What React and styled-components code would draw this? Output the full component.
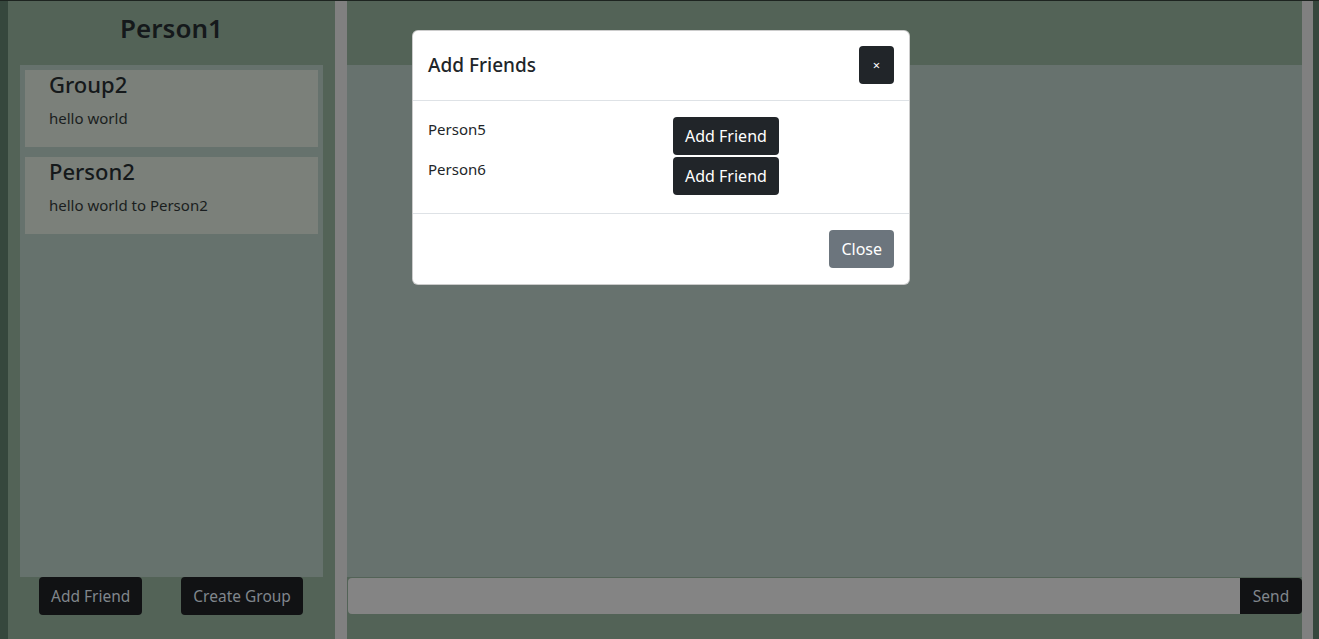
// chat page with the "Add Friends" modal open over it
import styled, { createGlobalStyle } from "styled-components";

const GlobalStyle = createGlobalStyle`
    body {
        margin: 0;
        background: #36473d;
        font-family: "Noto Sans", "Open Sans", sans-serif;
        overflow: hidden;
    }
`;

const Page = styled.div`
    position: relative;
    display: flex;
    height: 639px;
    border-top: 1px solid #1d2420;
    box-sizing: border-box;
    padding: 0 6px 0 8px;
`;

const Sidebar = styled.div`
    width: 327px;
    display: flex;
    flex-direction: column;
    background: #536357;
`;

const UserName = styled.h1`
    margin: 0;
    height: 64px;
    display: flex;
    align-items: center;
    justify-content: center;
    padding-bottom: 10px;
    box-sizing: border-box;
    font-size: 26px;
    font-weight: 600;
    color: #15191b;
`;

const ChatList = styled.div`
    flex: 1;
    margin: 0 12px;
    padding: 5px;
    background: #66726d;
    display: flex;
    flex-direction: column;
    gap: 10px;
`;

const ChatCard = styled.div`
    height: 77px;
    padding: 0 24px;
    background: #7b807a;
    box-sizing: border-box;
`;

const ChatName = styled.h3`
    margin: 0;
    font-size: 22px;
    font-weight: 500;
    line-height: 28px;
    color: #15191b;
`;

const LastMessage = styled.p`
    margin: 8px 0 0;
    font-size: 15px;
    line-height: 24px;
    color: #1a1e20;
`;

const SideActions = styled.div`
    height: 62px;
    display: flex;
    gap: 39px;
    padding-left: 31px;
    align-items: flex-start;
`;

const DarkButton = styled.button`
    height: 38px;
    padding: 0 12px;
    border: none;
    border-radius: 4px;
    background: ${p => (p.$dimmed ? "#111214" : "#212529")};
    color: ${p => (p.$dimmed ? "#80868c" : "#fff")};
    font-family: inherit;
    font-size: ${p => (p.$dimmed ? "15.5px" : "16px")};
    cursor: pointer;
`;

const Divider = styled.div`
    width: 12px;
    background: #808080;
`;

const Main = styled.div`
    flex: 1;
    display: flex;
    flex-direction: column;
    background: #536357;
`;

const MainHeader = styled.div`
    height: 64px;
`;

const Messages = styled.div`
    flex: 1;
    background: #67726e;
`;

const Composer = styled.div`
    height: 62px;
    display: flex;
    align-items: flex-start;
    padding: 1px 0 0 1px;
    box-sizing: border-box;
`;

const MessageInput = styled.input`
    flex: 1;
    height: 36px;
    border: none;
    border-radius: 4px 0 0 4px;
    background: #848484;
    box-sizing: border-box;
    outline: none;
`;

const SendButton = styled(DarkButton)`
    height: 36px;
    width: 62px;
    border-radius: 0 4px 4px 0;
`;

const RightDivider = styled(Divider)`
    width: 11px;
`;

const Modal = styled.div`
    position: absolute;
    left: 412px;
    top: 29px;
    width: 498px;
    background: #fff;
    border: 1px solid rgba(0, 0, 0, 0.2);
    border-radius: 6px;
    box-sizing: border-box;
    color: #212529;
`;

const ModalHeader = styled.div`
    display: flex;
    align-items: center;
    justify-content: space-between;
    padding: 15px 15px 16px;
    border-bottom: 1px solid #dee2e6;
`;

const ModalTitle = styled.h5`
    margin: 0;
    font-size: 19px;
    font-weight: 500;
`;

const CloseX = styled(DarkButton)`
    width: 35px;
    padding: 0;
    font-size: 13px;
`;

const ModalBody = styled.div`
    padding: 16px 15px 18px;
    border-bottom: 1px solid #dee2e6;
    display: flex;
    flex-direction: column;
    gap: 2px;
`;

const FriendRow = styled.div`
    display: grid;
    grid-template-columns: 245px auto;
    align-items: start;
    justify-items: start;
`;

const FriendName = styled.span`
    font-size: 15px;
    line-height: 24px;
`;

const ModalFooter = styled.div`
    display: flex;
    justify-content: flex-end;
    padding: 16px 15px;
`;

const GreyButton = styled(DarkButton)`
    background: #6c757d;
`;

const chats = [
    { name: "Group2", last: "hello world" },
    { name: "Person2", last: "hello world to Person2" },
];

const candidates = ["Person5", "Person6"];

export default function App() {
    return (
        <>
            <GlobalStyle />
            <Page>
                <Sidebar>
                    <UserName>Person1</UserName>
                    <ChatList>
                        {chats.map(chat => (
                            <ChatCard key={chat.name}>
                                <ChatName>{chat.name}</ChatName>
                                <LastMessage>{chat.last}</LastMessage>
                            </ChatCard>
                        ))}
                    </ChatList>
                    <SideActions>
                        <DarkButton $dimmed>Add Friend</DarkButton>
                        <DarkButton $dimmed>Create Group</DarkButton>
                    </SideActions>
                </Sidebar>
                <Divider />
                <Main>
                    <MainHeader />
                    <Messages />
                    <Composer>
                        <MessageInput />
                        <SendButton $dimmed>Send</SendButton>
                    </Composer>
                </Main>
                <RightDivider />

                <Modal>
                    <ModalHeader>
                        <ModalTitle>Add Friends</ModalTitle>
                        <CloseX>×</CloseX>
                    </ModalHeader>
                    <ModalBody>
                        {candidates.map(name => (
                            <FriendRow key={name}>
                                <FriendName>{name}</FriendName>
                                <DarkButton>Add Friend</DarkButton>
                            </FriendRow>
                        ))}
                    </ModalBody>
                    <ModalFooter>
                        <GreyButton>Close</GreyButton>
                    </ModalFooter>
                </Modal>
            </Page>
        </>
    );
}
